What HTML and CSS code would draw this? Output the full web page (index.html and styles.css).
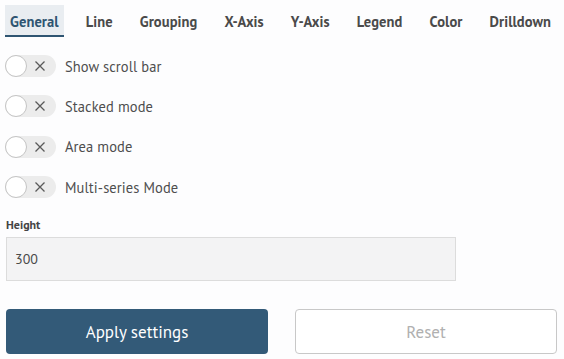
FILE: index.html
```html
<!DOCTYPE html>
<html>
<head>
<meta charset="utf-8">
<link rel="stylesheet" href="styles.css">
</head>
<body>
<div class="page">
  <nav class="tabs">
    <div class="tab active">General</div>
    <div class="tab">Line</div>
    <div class="tab">Grouping</div>
    <div class="tab">X-Axis</div>
    <div class="tab">Y-Axis</div>
    <div class="tab">Legend</div>
    <div class="tab">Color</div>
    <div class="tab">Drilldown</div>
  </nav>
  <div class="toggles">
    <label class="row"><span class="switch"><span class="knob"></span><svg class="x" viewBox="0 0 12 12"><path d="M1.5 1.5 L10.5 10.5 M10.5 1.5 L1.5 10.5"/></svg></span><span class="label">Show scroll bar</span></label>
    <label class="row"><span class="switch"><span class="knob"></span><svg class="x" viewBox="0 0 12 12"><path d="M1.5 1.5 L10.5 10.5 M10.5 1.5 L1.5 10.5"/></svg></span><span class="label">Stacked mode</span></label>
    <label class="row"><span class="switch"><span class="knob"></span><svg class="x" viewBox="0 0 12 12"><path d="M1.5 1.5 L10.5 10.5 M10.5 1.5 L1.5 10.5"/></svg></span><span class="label">Area mode</span></label>
    <label class="row"><span class="switch"><span class="knob"></span><svg class="x" viewBox="0 0 12 12"><path d="M1.5 1.5 L10.5 10.5 M10.5 1.5 L1.5 10.5"/></svg></span><span class="label">Multi-series Mode</span></label>
  </div>
  <div class="field">
    <div class="field-label">Height</div>
    <div class="input">300</div>
  </div>
  <div class="buttons">
    <button class="btn primary">Apply settings</button>
    <button class="btn secondary">Reset</button>
  </div>
</div>
</body>
</html>
```
FILE: styles.css
```css
* { box-sizing: border-box; }
body {
  margin: 0;
  background: #fdfdfe;
  font-family: "PT Sans", Roboto, "Liberation Sans", sans-serif;
  color: #4a4a4a;
}
.page {
  padding: 5px 7px 0 6px;
}
.tabs {
  display: flex;
  gap: 17px;
  margin-left: -1px;
}
.tab {
  height: 32px;
  padding: 4px 5px 0;
  line-height: 26px;
  font-size: 14.5px;
  letter-spacing: 0.1px;
  font-weight: 700;
  color: #4a4a4a;
  border-bottom: 2px solid transparent;
  white-space: nowrap;
}
.tab.active {
  background: #e9edf1;
  color: #2f5572;
  border-bottom-color: #2f5572;
}
.toggles {
  margin-top: 18px;
  display: flex;
  flex-direction: column;
  gap: 18.4px;
}
.row {
  display: flex;
  align-items: center;
  height: 22px;
  gap: 9px;
}
.switch {
  position: relative;
  width: 51px;
  height: 22px;
  border-radius: 11px;
  background: #ececec;
  margin-left: -1px;
}
.knob {
  position: absolute;
  left: 0;
  top: 0;
  width: 22px;
  height: 22px;
  border-radius: 50%;
  background: #fff;
  border: 1px solid #c4c4c4;
}
.x {
  position: absolute;
  left: 29px;
  top: 5px;
  width: 12px;
  height: 12px;
  fill: none;
  stroke: #5a5a5a;
  stroke-width: 1.3;
}
.label {
  font-size: 14.5px;
  letter-spacing: 0.1px;
  color: #4e4e4e;
}
.field {
  margin-top: 19px;
}
.field-label {
  font-size: 12px;
  font-weight: 700;
  color: #444;
  line-height: 16px;
}
.input {
  margin-top: 4px;
  width: 450px;
  height: 44px;
  background: #f3f3f4;
  border: 1px solid #dcdcdc;
  padding: 0 8px;
  line-height: 42px;
  font-size: 14px;
  color: #4a4a4a;
}
.buttons {
  margin-top: 28px;
  display: grid;
  grid-template-columns: 262px 262px;
  gap: 27px;
}
.btn {
  height: 45px;
  border-radius: 4px;
  font-family: inherit;
  font-size: 17px;
}
.primary {
  background: #335a78;
  color: #fff;
  border: none;
}
.secondary {
  background: #fff;
  color: #b0b0b0;
  border: 1px solid #c8c8c8;
}
```
